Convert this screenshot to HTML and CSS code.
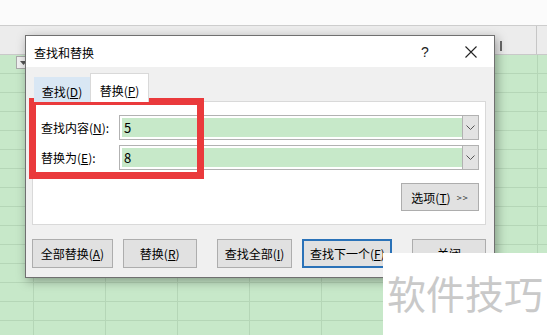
FILE: index.html
```html
<!DOCTYPE html>
<html lang="zh-CN">
<head>
<meta charset="utf-8">
<title>查找和替换</title>
<link rel="stylesheet" href="styles.css">
</head>
<body>
<div class="sheet">
  <div class="topbar"></div>
  <div class="colhead">
    <span class="mark"></span>
  </div>
  <div class="grid">
    <span class="filter"><svg width="7" height="4" viewBox="0 0 7 4"><path d="M0 0H7L3.5 4Z" fill="#555"/></svg></span>
  </div>

  <div class="dialog">
    <div class="titlebar">
      <span class="title">查找和替换</span>
      <span class="tbtn help">?</span>
      <span class="tbtn close"><svg width="12" height="12" viewBox="0 0 12 12"><path d="M0.5 0.5L11.5 11.5M11.5 0.5L0.5 11.5" stroke="#222" stroke-width="1.1" fill="none"/></svg></span>
    </div>
    <div class="body">
      <div class="tabs">
        <span class="tab tab-find">查找(<u>D</u>)</span>
        <span class="tab tab-replace">替换(<u>P</u>)</span>
      </div>
      <div class="panel">
        <div class="row">
          <span class="label">查找内容(<u>N</u>):</span>
          <div class="combo">
            <span class="field">5</span>
            <span class="dd"><svg width="9" height="5" viewBox="0 0 9 5"><path d="M0.5 0.5L4.5 4.5L8.5 0.5" stroke="#555" stroke-width="1" fill="none"/></svg></span>
          </div>
        </div>
        <div class="row">
          <span class="label">替换为(<u>E</u>):</span>
          <div class="combo">
            <span class="field">8</span>
            <span class="dd"><svg width="9" height="5" viewBox="0 0 9 5"><path d="M0.5 0.5L4.5 4.5L8.5 0.5" stroke="#555" stroke-width="1" fill="none"/></svg></span>
          </div>
        </div>
        <div class="optrow">
          <span class="btn opt">选项(<u>T</u>) <span class="arrows">&gt;&gt;</span></span>
        </div>
      </div>
      <div class="buttons">
        <span class="btn b1">全部替换(<u>A</u>)</span>
        <span class="btn b2">替换(<u>R</u>)</span>
        <span class="btn b3">查找全部(<u>I</u>)</span>
        <span class="btn b4">查找下一个(<u>F</u>)</span>
        <span class="btn b5">关闭</span>
      </div>
    </div>
  </div>

  <div class="redbox"></div>
  <div class="watermark">软件技巧</div>
</div>
</body>
</html>
```

FILE: styles.css
```css
* { box-sizing: border-box; }
html, body { margin: 0; padding: 0; }
body {
  font-family: "Noto Sans CJK SC", "Noto Sans", sans-serif;
  font-size: 12px;
  color: #000;
}
.sheet {
  position: relative;
  width: 547px;
  height: 335px;
  overflow: hidden;
  background: #fbfbfb;
}
.topbar {
  height: 26px;
  background: #fbfbfb;
  border-bottom: 1px solid #cdcdcd;
}
.colhead {
  position: relative;
  height: 29px;
  background: #ececec;
  border-bottom: 1px solid #c9c9c9;
  background-image: linear-gradient(to right, transparent 536px, #c6c6c6 536px, #c6c6c6 537px, transparent 537px);
}
.mark {
  position: absolute;
  left: 500px;
  top: 15px;
  width: 2px;
  height: 10px;
  background: #6a6a6a;
}
.grid {
  position: relative;
  height: 280px;
  background-color: #c7e8c9;
  background-image:
    linear-gradient(to bottom, transparent 18px, #b5d6b7 18px, #b5d6b7 19px, transparent 19px),
    linear-gradient(to right, transparent 71px, #b5d6b7 71px, #b5d6b7 72px, transparent 72px);
  background-size: 100% 19px, 72px 100%;
  background-position: 0 0, -38px 0;
}
.filter {
  position: absolute;
  left: 16px;
  top: 1px;
  width: 14px;
  height: 13px;
  border: 1px solid #a9a9a9;
  background: #f1f1f1;
  display: flex;
  align-items: center;
  justify-content: center;
}

/* dialog window */
.dialog {
  position: absolute;
  left: 25px;
  top: 35px;
  width: 470px;
  height: 243px;
  border: 1px solid #707070;
  background: #f0f0f0;
  box-shadow: 2px 3px 10px rgba(0, 0, 0, 0.35);
  display: flex;
  flex-direction: column;
}
.titlebar {
  height: 31px;
  background: #fff;
  display: flex;
  align-items: center;
}
.title {
  flex: 1;
  padding-left: 8px;
  padding-top: 1px;
}
.tbtn {
  width: 46px;
  height: 31px;
  display: flex;
  align-items: center;
  justify-content: center;
}
.help {
  font-family: "Liberation Sans", sans-serif;
  font-size: 14px;
  color: #222;
}
.body {
  flex: 1;
  padding: 6px 8px 0 6px;
  display: flex;
  flex-direction: column;
}
.tabs {
  display: flex;
  align-items: flex-end;
  padding-left: 2px;
  height: 29px;
  margin-bottom: -1px;
  position: relative;
  z-index: 1;
}
.tab {
  display: flex;
  align-items: center;
  justify-content: center;
  padding-top: 4px;
}
.tab-find {
  width: 56px;
  height: 25px;
  background: #d9e7f4;
}
.tab-replace {
  width: 59px;
  height: 29px;
  background: #fff;
  border: 1px solid #d9d9d9;
  border-bottom: none;
}
.panel {
  height: 124px;
  background: #fff;
  border: 1px solid #d9d9d9;
  padding: 13px 6px 0 0;
  display: flex;
  flex-direction: column;
  gap: 5px;
}
.row {
  display: flex;
  align-items: center;
  height: 25px;
}
.label {
  width: 86px;
  padding-left: 8px;
  white-space: nowrap;
}
.combo {
  flex: 1;
  height: 25px;
  border: 1px solid #b2b2b2;
  display: flex;
  background: #fff;
}
.field {
  flex: 1;
  margin: 2px 0 2px 2px;
  background: #c7e9c9;
  font-size: 13px;
  line-height: 19px;
  padding-left: 2px;
}
.dd {
  width: 16px;
  background: #e3e3e3;
  border-left: 1px solid #b2b2b2;
  display: flex;
  align-items: center;
  justify-content: center;
}
.optrow {
  display: flex;
  justify-content: flex-end;
  margin-top: 8px;
}
.btn {
  height: 29px;
  background: #e1e1e1;
  border: 1px solid #adadad;
  display: flex;
  align-items: center;
  justify-content: center;
  white-space: nowrap;
}
.opt {
  width: 78px;
  height: 28px;
}
.arrows {
  font-size: 9px;
  letter-spacing: 1px;
  margin-left: 6px;
  color: #333;
}
.buttons {
  display: flex;
  margin-top: 14px;
}
.b1 { width: 81px; }
.b2 { width: 74px; margin-left: 10px; }
.b3 { width: 76px; margin-left: 20px; }
.b4 { width: 90px; margin-left: 10px; border: 2px solid #2a72b8; }
.b5 { width: 74px; margin-left: 20px; }

/* annotation overlays */
.redbox {
  position: absolute;
  left: 29px;
  top: 98px;
  width: 175px;
  height: 81px;
  border: 7px solid #ea3a3c;
}
.watermark {
  position: absolute;
  left: 383px;
  top: 253px;
  width: 164px;
  height: 82px;
  background: #fff;
  color: #c9c9c9;
  font-size: 39px;
  line-height: 78px;
  padding-left: 4px;
  white-space: nowrap;
}
```
